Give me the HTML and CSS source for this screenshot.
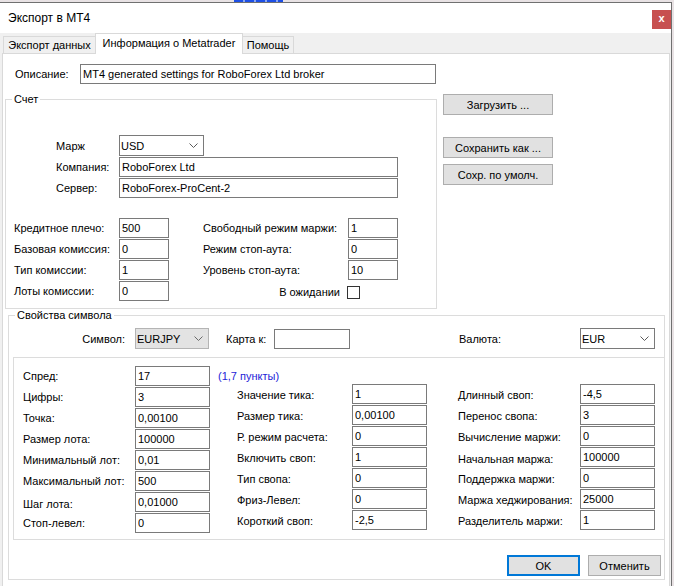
FILE: index.html
```html
<!DOCTYPE html>
<html lang="ru">
<head>
    <meta charset="UTF-8">
    <title>Экспорт в MT4</title>
    <link rel="stylesheet" href="styles.css">
</head>
<body>

<div class="desk"><div class="desk-link"></div></div>

<div class="window">
    <div class="titlebar">
        <span class="title">Экспорт в MT4</span>
        <div class="close">x</div>
    </div>

    <div class="tabs">
        <div class="tab tab-export">Экспорт данных</div>
        <div class="tab tab-info active">Информация о Metatrader</div>
        <div class="tab tab-help">Помощь</div>
    </div>

    <div class="panel">
        <div class="desc-row">
            <span class="desc-label">Описание:</span>
            <input class="field desc-input" type="text" value="MT4 generated settings for RoboForex Ltd broker">
        </div>

        <div class="top-row">
            <fieldset class="group account">
                <legend>Счет</legend>

                <div class="account-head">
                    <span>Марж</span>
                    <div class="combo combo-usd">
                        <span>USD</span>
                        <svg class="chevron" width="9" height="5" viewBox="0 0 9 5"><path d="M0.5 0.5 L4.5 4.5 L8.5 0.5" fill="none" stroke="#5a5a5a" stroke-width="1"/></svg>
                    </div>
                    <span>Компания:</span>
                    <input class="field wide-input" type="text" value="RoboForex Ltd">
                    <span>Сервер:</span>
                    <input class="field wide-input" type="text" value="RoboForex-ProCent-2">
                </div>

                <div class="account-grid">
                    <span>Кредитное плечо:</span>
                    <input class="field small-input" type="text" value="500">
                    <span>Свободный режим маржи:</span>
                    <input class="field small-input" type="text" value="1">

                    <span>Базовая комиссия:</span>
                    <input class="field small-input" type="text" value="0">
                    <span>Режим стоп-аута:</span>
                    <input class="field small-input" type="text" value="0">

                    <span>Тип комиссии:</span>
                    <input class="field small-input" type="text" value="1">
                    <span>Уровень стоп-аута:</span>
                    <input class="field small-input" type="text" value="10">

                    <span>Лоты комиссии:</span>
                    <input class="field small-input" type="text" value="0">
                    <span class="pending-label">В ожидании</span>
                    <div class="check"></div>
                </div>
            </fieldset>

            <div class="side-buttons">
                <button class="btn btn-side">Загрузить ...</button>
                <button class="btn btn-side btn-save">Сохранить как ...</button>
                <button class="btn btn-side btn-default">Сохр. по умолч.</button>
            </div>
        </div>

        <fieldset class="group symbol">
            <legend>Свойства символа</legend>

            <div class="symbol-row">
                <span class="sym-label">Символ:</span>
                <div class="combo combo-disabled combo-symbol">
                    <span>EURJPY</span>
                    <svg class="chevron" width="9" height="5" viewBox="0 0 9 5"><path d="M0.5 0.5 L4.5 4.5 L8.5 0.5" fill="none" stroke="#6a6a6a" stroke-width="1"/></svg>
                </div>
                <span class="map-label">Карта к:</span>
                <input class="field map-input" type="text" value="">
                <span class="currency-label">Валюта:</span>
                <div class="combo combo-eur">
                    <span>EUR</span>
                    <svg class="chevron" width="9" height="5" viewBox="0 0 9 5"><path d="M0.5 0.5 L4.5 4.5 L8.5 0.5" fill="none" stroke="#5a5a5a" stroke-width="1"/></svg>
                </div>
            </div>

            <div class="props">
                <div class="props-col col-left">
                    <span>Спред:</span><input class="field prop-input" type="text" value="17">
                    <span>Цифры:</span><input class="field prop-input" type="text" value="3">
                    <span>Точка:</span><input class="field prop-input" type="text" value="0,00100">
                    <span>Размер лота:</span><input class="field prop-input" type="text" value="100000">
                    <span>Минимальный лот:</span><input class="field prop-input" type="text" value="0,01">
                    <span>Максимальный лот:</span><input class="field prop-input" type="text" value="500">
                    <span class="low">Шаг лота:</span><input class="field prop-input" type="text" value="0,01000">
                    <span>Стоп-левел:</span><input class="field prop-input" type="text" value="0">
                </div>

                <div class="props-rest">
                    <div class="note">(1,7 пункты)</div>
                    <div class="props-pair">
                        <div class="props-col col-mid">
                            <span>Значение тика:</span><input class="field prop-input" type="text" value="1">
                            <span>Размер тика:</span><input class="field prop-input" type="text" value="0,00100">
                            <span>Р. режим расчета:</span><input class="field prop-input" type="text" value="0">
                            <span>Включить своп:</span><input class="field prop-input" type="text" value="1">
                            <span>Тип свопа:</span><input class="field prop-input" type="text" value="0">
                            <span>Фриз-Левел:</span><input class="field prop-input" type="text" value="0">
                            <span>Короткий своп:</span><input class="field prop-input" type="text" value="-2,5">
                        </div>
                        <div class="props-col col-right">
                            <span>Длинный своп:</span><input class="field prop-input" type="text" value="-4,5">
                            <span>Перенос свопа:</span><input class="field prop-input" type="text" value="3">
                            <span>Вычисление маржи:</span><input class="field prop-input" type="text" value="0">
                            <span class="low">Начальная маржа:</span><input class="field prop-input" type="text" value="100000">
                            <span>Поддержка маржи:</span><input class="field prop-input" type="text" value="0">
                            <span>Маржа хеджирования:</span><input class="field prop-input" type="text" value="25000">
                            <span>Разделитель маржи:</span><input class="field prop-input" type="text" value="1">
                        </div>
                    </div>
                </div>
            </div>

            <div class="dialog-buttons">
                <button class="btn btn-dialog btn-ok">OK</button>
                <button class="btn btn-dialog">Отменить</button>
            </div>
        </fieldset>
    </div>
</div>

</body>
</html>
```

FILE: styles.css
```css
* {
    box-sizing: border-box;
}

body {
    margin: 0;
    width: 674px;
    height: 586px;
    overflow: hidden;
    background-color: #e8e2e4;
    font-family: "Liberation Sans", Arial, sans-serif;
    font-size: 11px;
    color: #000;
}

/* strip of the desktop behind the dialog */
.desk {
    height: 2px;
    display: flex;
}

.desk-link {
    width: 49px;
    height: 2px;
    margin-left: 234px;
    background: repeating-linear-gradient(90deg, #1d4fe6 0 9px, #8aa6f0 9px 11px);
}

.window {
    width: 672px;
    height: 584px;
    background-color: #f0f0f0;
    border-top: 1px solid #707070;
    border-right: 1px solid #707070;
}

.titlebar {
    height: 30px;
    background-color: #fff;
    display: flex;
    justify-content: space-between;
    align-items: flex-start;
}

.title {
    padding-left: 8px;
    font-size: 12px;
    line-height: 30px;
}

.close {
    width: 19px;
    height: 19px;
    margin-top: 7px;
    background-color: #c75050;
    color: #fff;
    font-weight: bold;
    font-size: 11px;
    line-height: 17px;
    text-align: center;
}

.tabs {
    height: 20px;
    display: flex;
    align-items: flex-end;
    padding-left: 3px;
}

.tab {
    height: 17px;
    border: 1px solid #d9d9d9;
    border-bottom: none;
    background-color: #f0f0f0;
    text-align: center;
    line-height: 16px;
    white-space: nowrap;
}

.tab-export {
    width: 92px;
    border-right: none;
}

.tab-info {
    width: 148px;
}

.tab-help {
    width: 51px;
    border-left: none;
}

.tab.active {
    height: 21px;
    margin-bottom: -1px;
    background-color: #fff;
    line-height: 18px;
    position: relative;
    z-index: 1;
}

.panel {
    margin-left: 2px;
    width: 668px;
    height: 540px;
    background-color: #fff;
    border: 1px solid #d9d9d9;
}

.field {
    height: 20px;
    border: 1px solid #7a7a7a;
    padding: 0 2px;
    margin: 0;
    font: inherit;
    color: #000;
    background-color: #fff;
    outline: none;
}

.desc-row {
    display: flex;
    align-items: center;
    margin-top: 10px;
    padding-left: 12px;
}

.desc-label {
    width: 65px;
}

.desc-input {
    width: 356px;
}

.top-row {
    display: flex;
    align-items: flex-start;
    margin-top: 9px;
}

.group {
    margin: 0;
    padding: 0;
    min-width: 0;
    border: 1px solid #dcdcdc;
}

.group legend {
    margin-left: 6px;
    padding: 0 2px;
    line-height: 13px;
}

.account {
    margin-left: 2px;
    width: 432px;
    padding-bottom: 7px;
}

.account-head {
    display: grid;
    grid-template-columns: 63px auto;
    row-gap: 1px;
    align-items: center;
    justify-items: start;
    margin-top: 29px;
    padding-left: 50px;
}

.combo {
    height: 21px;
    border: 1px solid #7a7a7a;
    background-color: #fff;
    display: flex;
    align-items: center;
    justify-content: space-between;
    padding: 0 5px 0 1px;
}

.combo-disabled {
    background-color: #e3e3e3;
    border-color: #b4b4b4;
}

.combo-usd {
    width: 85px;
}

.wide-input {
    width: 279px;
}

.account-grid {
    display: grid;
    grid-template-columns: 105px 84px 145px 50px;
    grid-auto-rows: 20px;
    row-gap: 1px;
    align-items: center;
    justify-items: start;
    margin-top: 20px;
    padding-left: 8px;
}

.small-input {
    width: 50px;
}

.pending-label {
    justify-self: stretch;
    text-align: right;
    padding-right: 8px;
    padding-top: 2px;
}

.check {
    width: 13px;
    height: 13px;
    margin-left: -1px;
    margin-top: 2px;
    border: 1px solid #333;
    background-color: #fff;
}

.side-buttons {
    display: flex;
    flex-direction: column;
    margin-left: 6px;
    padding-top: 1px;
}

.btn {
    height: 21px;
    padding: 0;
    background-color: #e1e1e1;
    border: 1px solid #adadad;
    font: inherit;
    color: #000;
}

.btn-side {
    width: 110px;
}

.btn-save {
    margin-top: 22px;
}

.btn-default {
    margin-top: 6px;
}

.symbol {
    margin-left: 5px;
    width: 657px;
    padding-bottom: 3px;
}

.symbol-row {
    display: flex;
    align-items: center;
    margin-top: 6px;
}

.sym-label {
    width: 126px;
    text-align: right;
    padding-right: 10px;
}

.combo-symbol {
    width: 74px;
}

.map-label {
    width: 48px;
    margin-left: 17px;
}

.map-input {
    width: 76px;
}

.currency-label {
    width: 121px;
    margin-left: 109px;
}

.combo-eur {
    width: 75px;
}

.props {
    display: flex;
    width: 652px;
    height: 183px;
    margin-top: 8px;
    margin-left: 4px;
    border: 1px solid #dcdcdc;
}

.props-col {
    display: grid;
    grid-auto-rows: 20px;
    row-gap: 1px;
    align-items: center;
    justify-items: start;
    white-space: nowrap;
}

.props-col .low {
    padding-top: 4px;
}

.col-left {
    grid-template-columns: 112px 75px;
    padding-left: 9px;
    padding-top: 8px;
}

.prop-input {
    width: 75px;
}

.props-rest {
    padding-top: 8px;
}

.note {
    height: 18px;
    padding-top: 4px;
    margin-left: 8px;
    line-height: 13px;
    color: #2424d8;
}

.props-pair {
    display: flex;
    align-items: flex-start;
}

.col-mid {
    grid-template-columns: 115px 75px;
    padding-left: 27px;
}

.col-right {
    grid-template-columns: 122px 75px;
    margin-left: 31px;
}

.col-mid span,
.col-right span {
    padding-top: 2px;
}

.dialog-buttons {
    display: flex;
    justify-content: flex-end;
    gap: 8px;
    margin-top: 15px;
    padding-right: 3px;
}

.btn-dialog {
    width: 73px;
}

.btn-ok {
    border: 2px solid #0078d7;
}
```
